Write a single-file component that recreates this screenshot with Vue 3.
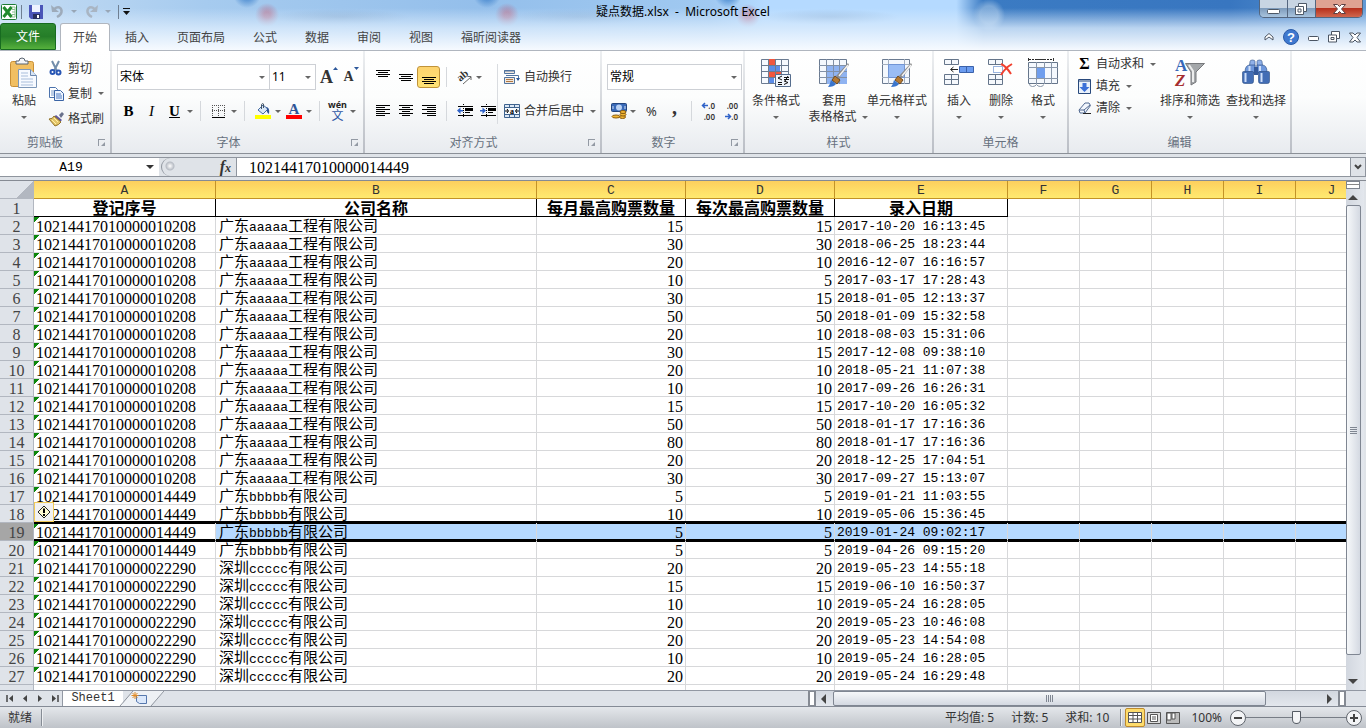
<script setup>
import { ref } from 'vue'

const tabs = ['插入', '页面布局', '公式', '数据', '审阅', '视图', '福昕阅读器']
const columns = ['A', 'B', 'C', 'D', 'E', 'F', 'G', 'H', 'I', 'J']
const heads = ['登记序号', '公司名称', '每月最高购票数量', '每次最高购票数量', '录入日期']

const A = '10214417010000010208'
const B = '10214417010000014449'
const C = '10214417010000022290'
const names = {
  [A]: ['广东', 'aaaaa', '工程有限公司'],
  [B]: ['广东', 'bbbbb', '有限公司'],
  [C]: ['深圳', 'ccccc', '有限公司']
}
const rows = [
  [A, 15, 15, '2017-10-20 16:13:45'],
  [A, 30, 30, '2018-06-25 18:23:44'],
  [A, 20, 10, '2016-12-07 16:16:57'],
  [A, 10, 5, '2017-03-17 17:28:43'],
  [A, 30, 15, '2018-01-05 12:13:37'],
  [A, 50, 50, '2018-01-09 15:32:58'],
  [A, 20, 10, '2018-08-03 15:31:06'],
  [A, 30, 15, '2017-12-08 09:38:10'],
  [A, 20, 10, '2018-05-21 11:07:38'],
  [A, 10, 10, '2017-09-26 16:26:31'],
  [A, 15, 15, '2017-10-20 16:05:32'],
  [A, 50, 50, '2018-01-17 17:16:36'],
  [A, 80, 80, '2018-01-17 17:16:36'],
  [A, 20, 20, '2018-12-25 17:04:51'],
  [A, 30, 30, '2017-09-27 15:13:07'],
  [B, 5, 5, '2019-01-21 11:03:55'],
  [B, 10, 10, '2019-05-06 15:36:45'],
  [B, 5, 5, '2019-01-24 09:02:17'],
  [B, 5, 5, '2019-04-26 09:15:20'],
  [C, 20, 20, '2019-05-23 14:55:18'],
  [C, 15, 15, '2019-06-10 16:50:37'],
  [C, 10, 10, '2019-05-24 16:28:05'],
  [C, 20, 20, '2019-05-23 10:46:08'],
  [C, 20, 20, '2019-05-23 14:54:08'],
  [C, 10, 10, '2019-05-24 16:28:05'],
  [C, 20, 20, '2019-05-24 16:29:48']
].map((r, i) => ({ n: i + 2, id: r[0], name: names[r[0]], month: r[1], once: r[2], date: r[3] }))

const formula = ref(B)
const cellName = ref('A19')
const zoom = ref(50)
</script>

<template>
  <div class="app">
    <header class="chrome">
      <div class="title">
        <div class="quick">
          <svg class="logo" width="16" height="16"><rect x=".5" y=".5" width="15" height="15" rx="1" fill="#fff" stroke="#1d7a35" /><path d="M10 3h4v10h-4M11 5.500h3M11 8h3M11 10.500h3" stroke="#8cc090" fill="none" /><path d="M2.500 3l8 10M10.500 3l-8 10" stroke="#218a2d" stroke-width="3" /></svg>
          <i class="bar"></i>
          <button aria-label="保存"><svg width="14" height="14"><path d="M0 0h14v14H2l-2-2z" fill="#4a55b8" /><rect x="3" width="8" height="7" fill="#eef3ff" /><rect x="4" y="9" width="7" height="5" fill="#28305f" /><rect x="8" y="10" width="2" height="3" fill="#fff" /></svg></button>
          <button class="undo" aria-label="撤消"><svg width="13" height="13"><path d="M0 0l1 7h7z" fill="#9eabba" /><path d="M3.500 4Q6 1.500 8.500 2.500 11 4 10.500 7 10 10 6 12" fill="none" stroke="#9eabba" stroke-width="2.500" /></svg></button><i class="arr pale"></i>
          <button class="redo" aria-label="恢复"><svg width="13" height="13"><path d="M13 0l-1 7H5z" fill="#a9b5c3" /><path d="M9.500 4Q7 1.500 4.500 2.500 2 4 2.500 7 3 10 7 12" fill="none" stroke="#a9b5c3" stroke-width="2.500" /></svg></button><i class="arr pale"></i>
          <i class="bar"></i>
          <button class="more" aria-label="自定义"><svg width="7" height="7"><path d="M0 .5h7" stroke="#111" /><path d="M0 3h7L3.500 7z" fill="#111" /></svg></button>
        </div>
        <h1>疑点数据.xlsx&nbsp; -&nbsp; Microsoft Excel</h1>
        <div class="win">
          <button aria-label="最小化"><svg width="13" height="12"><rect x=".5" y="6.500" width="12" height="4" rx="1" fill="#fff" stroke="#4d5866" /></svg></button>
          <button aria-label="还原"><svg width="13" height="12"><path d="M3.500 .5h8v8h-3v3h-8v-8h3z" fill="#fff" stroke="#4d5866" /><path d="M3.500 3.500h5v5M3 6h3v3H3z" fill="none" stroke="#4d5866" /></svg></button>
          <button class="close" aria-label="关闭"><svg width="13" height="12"><path d="M.5 1.500h4l2 2 2-2h4L8.500 6l4 4.500h-4l-2-2-2 2h-4L4.500 6z" fill="#fff" stroke="#5d4043" /></svg></button>
        </div>
      </div>
      <nav class="tabs">
        <button class="file">文件</button>
        <button class="on">开始</button>
        <button v-for="t in tabs" :key="t">{{ t }}</button>
        <div class="tools">
          <svg width="10" height="8"><path d="M1 4l4-3.500L9 4v3L5 4 1 7z" fill="#fff" stroke="#4b5563" /></svg>
          <svg width="16" height="16"><circle cx="8" cy="8" r="7.500" fill="#3f78cf" stroke="#2a5ba8" /><text x="8" y="13" class="q">?</text></svg>
          <svg width="11" height="12"><rect x=".5" y="5.500" width="10" height="4" rx="1" fill="#fff" stroke="#4b5563" /></svg>
          <svg width="12" height="12"><path d="M3.500.5h8v7h-3v3.500h-8V4h3z" fill="#fff" stroke="#4b5563" /><path d="M3.500 4h5v3.500M3 6.500h3v2H3z" fill="none" stroke="#4b5563" /></svg>
          <svg width="12" height="11"><path d="M.5 1h3.500l2 2 2-2h3.500L8 5.500l3.500 4.500H8L6 8l-2 2H.5L4 5.500z" fill="#fff" stroke="#4b5563" /></svg>
        </div>
      </nav>
    </header>

    <main class="ribbon">
      <section class="group clip">
        <div class="body">
          <button class="big paste">
            <svg width="28" height="32" viewBox="0 0 28 32"><rect x=".5" y="3.500" width="23" height="25" rx="2" fill="#f1bf62" stroke="#c98f35" /><path d="M6 6V3h3q0-3 3-3t3 3h3v3z" fill="#f3f5f8" stroke="#59636f" /><path d="M8.500 11.500h12l6 6v12h-18z" fill="#f7faff" stroke="#7d97b8" /><path d="M20.500 11.500v6h6" fill="#d7e4f4" stroke="#6d89b0" /><path d="M11 15h7M11 18h7M11 21h12M11 24h12M11 27h12" stroke="#a9bedb" /></svg>
            <span>粘贴</span><i class="arr"></i>
          </button>
          <div class="stack">
            <button><svg width="14" height="15"><path d="M3 0l5 10M10 0L5 10" stroke="#718dab" stroke-width="2" /><g fill="none" stroke="#2856b4" stroke-width="2"><circle cx="3.500" cy="11" r="2" /><circle cx="9.500" cy="11.500" r="2" /></g></svg>剪切</button>
            <button><svg width="15" height="14"><path d="M.5.500h6l2 2v8h-8z" fill="#fff" stroke="#4c73ad" /><path d="M2 4h4M2 6h4M2 8h4" stroke="#7b9dcc" /><path d="M5.500 3.500h6l3 3v7h-9z" fill="#eef5ff" stroke="#3a64a5" /><path d="M7 7h5M7 9h6M7 11h6" stroke="#4c7bc1" /></svg>复制<i class="arr"></i></button>
            <button><svg width="15" height="14"><path d="M10 3l3-3 2 2-3 4z" fill="#69718c" /><path d="M7 3l6 5-2 2-6-5z" fill="#5f579e" /><path d="M0 7q4 0 5-3l7 6q-2 3-6 4z" fill="#e4c568" stroke="#92732a" /><path d="M3 8l4 4M5 6l4 4" stroke="#fff0a8" /></svg>格式刷</button>
          </div>
        </div>
        <footer>剪贴板<i class="launch"></i></footer>
      </section>

      <section class="group font">
        <div class="body rows">
          <div class="line">
            <span class="combo face"><select aria-label="字体"><option>宋体</option></select><i class="arr"></i></span>
            <span class="combo size"><select aria-label="字号"><option>11</option></select><i class="arr"></i></span>
            <button class="w22 big-a" aria-label="增大字号"><b>A</b><svg width="5" height="3"><path d="M0 3h5L2.500 0z" fill="#2c579a" /></svg></button>
            <button class="w22 small-a" aria-label="减小字号"><b>A</b><svg width="5" height="3"><path d="M0 0h5L2.500 3z" fill="#2c579a" /></svg></button>
          </div>
          <div class="line second">
            <button class="w23 serif"><b>B</b></button>
            <button class="w23 serif"><em>I</em></button>
            <button class="w23 serif"><b><u>U</u></b></button><i class="arr"></i>
            <i class="sep"></i>
            <button class="w23" aria-label="边框"><svg width="13" height="13"><path d="M.5 0v11M6.500 0v11M12.500 0v11M0 .5h13M0 5.500h13" stroke="#555" stroke-dasharray="1 1" /><path d="M0 12.500h13" stroke="#000" /></svg></button><i class="arr"></i>
            <i class="sep"></i>
            <button class="w23" aria-label="填充颜色"><svg width="16" height="16"><path d="M3 7l5-5 5 4-5 5z" fill="#d9e8f9" stroke="#446ba3" /><path d="M6.500 6V1.500Q7 0 8.500 1v4" fill="none" stroke="#456" /><path d="M11 4q4 0 3 7-3-2-2-5z" fill="#2f5597" /><path d="M0 12h16v4H0z" fill="#ff0" /></svg></button><i class="arr"></i>
            <button class="w23" aria-label="字体颜色"><svg width="16" height="16"><text x="8" y="11" class="fc">A</text><path d="M0 12h16v4H0z" fill="red" /></svg></button><i class="arr"></i>
            <i class="sep"></i>
            <button class="w23 wen" aria-label="拼音"><small>wén</small><span>文</span></button><i class="arr"></i>
          </div>
        </div>
        <footer>字体<i class="launch"></i></footer>
      </section>

      <section class="group align">
        <div class="body">
          <div class="rows">
            <div class="line">
              <button class="w23" aria-label="顶端对齐"><svg width="14" height="16"><path d="M0 1.500h14M2 3.500h10M0 5.500h14M2 7.500h10" stroke="#000" /></svg></button>
              <button class="w23" aria-label="垂直居中"><svg width="14" height="16"><path d="M0 5.500h14M2 7.500h10M0 9.500h14M2 11.500h10" stroke="#000" /></svg></button>
              <button class="w23 lit" aria-label="底端对齐"><svg width="14" height="16"><path d="M0 8.500h14M2 10.500h10M0 12.500h14M2 14.500h10" stroke="#000" /></svg></button>
              <i class="sep"></i>
              <button class="w23" aria-label="方向"><svg width="16" height="15"><text x="1" y="10" class="ab" transform="rotate(-40 5 8)">ab</text><path d="M6 14l8-7M10.500 6.500H14v3.500" stroke="#666" fill="none" /></svg></button><i class="arr"></i>
            </div>
            <div class="line second">
              <button class="w23" aria-label="左对齐"><svg width="14" height="12"><path d="M0 .5h14M0 2.500h9M0 4.500h14M0 6.500h9M0 8.500h14M0 10.500h9" stroke="#000" /></svg></button>
              <button class="w23" aria-label="居中"><svg width="14" height="12"><path d="M0 .5h14M3 2.500h8M0 4.500h14M3 6.500h8M0 8.500h14M3 10.500h8" stroke="#000" /></svg></button>
              <button class="w23" aria-label="右对齐"><svg width="14" height="12"><path d="M0 .5h14M5 2.500h9M0 4.500h14M5 6.500h9M0 8.500h14M5 10.500h9" stroke="#000" /></svg></button>
              <i class="sep"></i>
              <button class="w23" aria-label="减少缩进"><svg width="16" height="14"><path d="M1 2.500h15M8 4.500h8M8 6.500h8M8 8.500h5M1 11.500h15" stroke="#000" /><path d="M8 5.500h8" stroke="#000" /><path d="M6.500 0v14" stroke="#000" stroke-dasharray="1 1" /><path d="M0 6.500l3.500-3V6H6v1.500H3.500V10z" fill="#2f62c8" /></svg></button>
              <button class="w23" aria-label="增加缩进"><svg width="16" height="14"><path d="M1 2.500h15M8 4.500h8M8 6.500h8M8 8.500h5M1 11.500h15" stroke="#000" /><path d="M8 5.500h8" stroke="#000" /><path d="M6.500 0v14" stroke="#000" stroke-dasharray="1 1" /><path d="M6 6.500l-3.500-3V6H0v1.500h2.500V10z" fill="#2f62c8" /></svg></button>
            </div>
          </div>
          <i class="rule"></i>
          <div class="rows wrap">
            <button class="line text"><svg width="16" height="15"><path d="M.5.500h10v3H.5zM.5 7.500h10v6H.5z" fill="#f2e8dd" stroke="#52749f" /><path d="M0 1h11" stroke="#52749f" /><path d="M2 9.500h7M2 11.500h7" stroke="#b27842" /><path d="M2 5.500h12.500V10" stroke="#52749f" fill="none" /><path d="M12 8h4l-2 3z" fill="#2d5797" /></svg>自动换行</button>
            <button class="line text second"><svg width="16" height="14"><path d="M.5.500h15v13H.5z" fill="#dce8f6" stroke="#3e638f" /><path d="M0 3.500h16M0 10.500h16M5.500 0v3M10.500 0v3M5.500 11v3M10.500 11v3" stroke="#3e638f" /><path d="M1 4h14v6H1z" fill="#f6fafe" /><path d="M1 7h3M15 7h-3M3 5l1.500 2L3 9M13 5l-1.500 2L13 9" stroke="#000" fill="none" /><text x="8" y="9.500" class="ma">a</text></svg>合并后居中<i class="arr"></i></button>
          </div>
        </div>
        <footer>对齐方式<i class="launch"></i></footer>
      </section>

      <section class="group number">
        <div class="body rows">
          <div class="line"><span class="combo fmt"><select aria-label="数字格式"><option>常规</option></select><i class="arr"></i></span></div>
          <div class="line second">
            <button class="w23" aria-label="会计格式"><svg width="16" height="16"><rect x=".5" y=".5" width="15" height="8" rx="1" fill="#3969b7" stroke="#23457e" /><circle cx="8" cy="4.500" r="3" fill="#b9d1f3" /><path d="M2 3v3M14 3v3" stroke="#cfe0f8" /><g fill="#f2b632" stroke="#8a5c10"><ellipse cx="5" cy="13.500" rx="4" ry="1.500" /><ellipse cx="11.500" cy="14" rx="3" ry="1.500" /><ellipse cx="12" cy="11.500" rx="3" ry="1.500" /><ellipse cx="12" cy="9" rx="3" ry="1.500" /></g></svg></button><i class="arr"></i>
            <button class="w23 percent">%</button>
            <button class="w23 comma">,</button>
            <i class="sep"></i>
            <button class="w23 dec"><span><svg width="6" height="5"><path d="M6 2.500H1M3 0L.5 2.500 3 5" fill="none" stroke="#2f62c8" stroke-width="1.500" /></svg>.0</span><span>.00</span></button>
            <button class="w23 dec"><span>.00</span><span><svg width="6" height="5"><path d="M0 2.500h5M3 0l2.500 2.500L3 5" fill="none" stroke="#2f62c8" stroke-width="1.500" /></svg>.0</span></button>
          </div>
        </div>
        <footer>数字<i class="launch"></i></footer>
      </section>

      <section class="group styles">
        <div class="body">
          <button class="big b62">
            <svg width="30" height="30"><path d="M.5 1.500h27v24H.5z" fill="#f6faff" stroke="#6b7b91" /><path d="M7 1h7v6H7zM7 14h13v6H7z" fill="#f0573f" /><path d="M7 7h12v6H7zM7 20h6v5H7z" fill="#5c8de8" /><path d="M0 7.500h28M0 13.500h28M0 19.500h28M7.500 1v25M14.500 1v25M20.500 1v25" stroke="#6b7b91" fill="none" /><path d="M14.500 16.500h15v12h-15z" fill="#f1f6fd" stroke="#556d8d" /><path d="M21 18l-4 2 4 2M17 24.500h4M17 26.500h4M23 19.500h5M23 21.500h5M27 18l-3 5M23 23l4 1.500-4 2" fill="none" stroke="#111" /></svg>
            <span>条件格式</span><i class="arr"></i>
          </button>
          <button class="big b54">
            <svg width="30" height="30"><path d="M.5 1.500h27v24H.5z" fill="#f4f8fd" stroke="#6b7b91" /><path d="M7 8h21v18H7z" fill="#8fb3f1" /><path d="M0 7.500h28M0 13.500h28M0 19.500h28M7.500 1v25M14.500 1v25M20.500 1v25" stroke="#8190a6" fill="none" /><path d="M30 7L20 20l-3-2L29 5z" fill="#8b8b8b" /><path d="M29 7l-9 11" stroke="#f4f4f4" stroke-width="1.500" /><path d="M16 18l5 4-3 4-5-4z" fill="#b77a32" stroke="#6e4a1f" /><path d="M12 22l5 4q-2 3-8 3 2-2 3-7z" fill="#3a75cc" /></svg>
            <span>套用</span><span class="two">表格格式<i class="arr"></i></span>
          </button>
          <button class="big b72">
            <svg width="30" height="30"><path d="M.5 1.500h27v24H.5z" fill="#f4f8fd" stroke="#6b7b91" /><path d="M0 6.500h28M0 19.500h28M6.500 1v25M22.500 1v25" stroke="#a4afbe" fill="none" /><path d="M6.500 6.500h16v13h-16z" fill="#9abdf5" stroke="#7195d5" /><path d="M30 7L20 20l-3-2L29 5z" fill="#8b8b8b" /><path d="M29 7l-9 11" stroke="#f4f4f4" stroke-width="1.500" /><path d="M16 18l5 4-3 4-5-4z" fill="#b77a32" stroke="#6e4a1f" /><path d="M12 22l5 4q-2 3-8 3 2-2 3-7z" fill="#3a75cc" /></svg>
            <span>单元格样式</span><i class="arr"></i>
          </button>
        </div>
        <footer>样式</footer>
      </section>

      <section class="group cells">
        <div class="body">
          <button class="big b42">
            <svg width="30" height="30"><path d="M.5 1.500h14v5H.5zM7.500 1v5M.5 16.500h14v10H.5zM7.500 16v10M0 21.500h15" fill="#f5f8fc" stroke="#65758a" /><path d="M15.500 8.500h14v6h-14zM22.500 8.500v6" fill="#6b9cf0" stroke="#3b62aa" /><path d="M14 11.500H7M9.500 9L6.500 11.500l3 2.500" fill="none" stroke="#222" /></svg>
            <span>插入</span><i class="arr"></i>
          </button>
          <button class="big b42">
            <svg width="26" height="30"><path d="M.5 1.500h14v5H.5zM7.500 1v5M.5 16.500h14v10H.5zM7.500 16v10M0 21.500h15" fill="#f5f8fc" stroke="#65758a" /><path d="M5.500 8.500h9v6h-9z" fill="#fff" stroke="#3469bf" stroke-dasharray="1 1" /><path d="M13 6q5 2 10 10M24 6q-7 4-11 11" fill="none" stroke="#f1402f" stroke-width="2" /></svg>
            <span>删除</span><i class="arr"></i>
          </button>
          <button class="big b42">
            <svg width="30" height="30"><path d="M1 1.500h25" stroke="#222" stroke-dasharray="2 1" /><path d="M.5 0v3M25.500 0v3M8 1.500h10" stroke="#333" /><path d="M.5 4.500h29v21H.5z" fill="#f4f8fd" stroke="#65758a" /><path d="M0 9.500h30M0 20.500h30M8.500 4v22M16.500 4v22M23.500 4v22" stroke="#8997aa" fill="none" /><path d="M9 10h8v10H9z" fill="#6e9ded" /><path d="M1.500 26q0 2.500 3 2.500t4-2q1 2 4 2t3-2" fill="#fff" stroke="#8694a8" /></svg>
            <span>格式</span><i class="arr"></i>
          </button>
        </div>
        <footer>单元格</footer>
      </section>

      <section class="group edit">
        <div class="body">
          <div class="stack">
            <button><b class="sum">Σ</b>自动求和<i class="arr"></i></button>
            <button><svg width="13" height="15"><path d="M.5.500h12v14H.5z" fill="#e9f1fb" stroke="#28497c" /><path d="M0 2h13" stroke="#28497c" /><path d="M4.500 4h4v4h3l-5 5-5-5h3z" fill="#3a70d8" /></svg>填充<i class="arr"></i></button>
            <button><svg width="13" height="12"><path d="M1 8l6-7h4l1.500 2.500L7 11H2z" fill="#f3f7fd" stroke="#526a91" /><path d="M1 8h5l6-5M6 8l1 3" fill="none" stroke="#526a91" /><path d="M5 11.500h8" stroke="#222" /></svg>清除<i class="arr"></i></button>
          </div>
          <button class="big b66">
            <svg width="30" height="30"><text x="0" y="13" class="sa">A</text><text x="0" y="28" class="sz">Z</text><path d="M10.500 5.500h19L21 14v10l-5 3V14z" fill="#a4a7aa" stroke="#77797c" /><path d="M14 7l4 6v11" stroke="#eceded" stroke-width="2" fill="none" /></svg>
            <span>排序和筛选</span><i class="arr"></i>
          </button>
          <button class="big b66">
            <svg width="28" height="30"><g stroke="#294b81" stroke-width=".6"><path d="M8 3.500Q8 2 10.500 2t2.500 1.500V12H7zM20 3.500Q20 2 17.500 2T15 3.500V12h6z" fill="#8fb0e8" /><path d="M3 14q0-7 5-7h5v8H3zM25 14q0-7-5-7h-5v8h10z" fill="#6f98dc" /><path d="M.500 14.500q0-1 1-1h9q1 0 1 1v9q0 2-2 2h-7q-2 0-2-2zM16.500 14.500q0-1 1-1h9q1 0 1 1v9q0 2-2 2h-7q-2 0-2-2z" fill="#426db5" /></g><path d="M3.500 15v9M19.500 15v9M7.500 8v5M18 8v5" stroke="#cfe0fa" stroke-width="2" /><path d="M12 9h4v8h-4z" fill="#33599b" /></svg>
            <span>查找和选择</span><i class="arr"></i>
          </button>
        </div>
        <footer>编辑</footer>
      </section>
    </main>

    <div class="fbar">
      <div class="namebox"><input v-model="cellName" aria-label="名称框"><i class="arr dark"></i></div>
      <div class="fx"><i class="knob"></i><em>f<small>x</small></em></div>
      <input v-model="formula" class="formula" aria-label="编辑栏">
      <button class="expand" aria-label="展开编辑栏"><svg width="8" height="6"><path d="M1 1l3 3 3-3" fill="none" stroke="#444" stroke-width="2" /></svg></button>
    </div>

    <div class="sheet">
      <div class="grid">
        <table>
          <colgroup><col class="c0"><col class="ca"><col class="cb"><col class="cc"><col class="cc"><col class="ce"><col v-for="k in 5" :key="k" class="cf"></colgroup>
          <thead>
            <tr><th class="corner"></th><th v-for="c in columns" :key="c">{{ c }}</th></tr>
          </thead>
          <tbody>
            <tr class="top"><th>1</th><td v-for="h in heads" :key="h" class="head">{{ h }}</td><td v-for="k in 5" :key="k"></td></tr>
            <tr v-for="r in rows" :key="r.n" :class="{ sel: r.n === 19 }">
              <th>{{ r.n }}</th>
              <td class="id">{{ r.id }}<span v-if="r.n === 18" class="warn"><svg width="14" height="14"><path d="M7 1l6 6-6 6-6-6z" fill="#fffbd0" stroke="#222" /><path d="M7 3.500v4.500M7 9v2" stroke="#000" stroke-width="2" /></svg></span></td>
              <td class="name">{{ r.name[0] }}<span>{{ r.name[1] }}</span>{{ r.name[2] }}</td>
              <td class="num">{{ r.month }}</td>
              <td class="num">{{ r.once }}</td>
              <td class="date">{{ r.date }}</td>
              <td v-for="k in 5" :key="k"></td>
            </tr>
            <tr><th></th><td v-for="k in 10" :key="k"></td></tr>
          </tbody>
        </table>
      </div>
      <div class="vscroll">
        <i class="split"></i>
        <i class="tri up"></i>
        <i class="thumb"></i>
        <i class="tri down"></i>
      </div>
    </div>

    <div class="sheetbar">
      <div class="left">
        <div class="nav">
          <button aria-label="第一张"><svg width="8" height="7"><path d="M1 0v7" stroke="#444" stroke-width="1.500" /><path d="M7 0v7L3 3.500z" fill="#444" /></svg></button>
          <button aria-label="上一张"><svg width="8" height="7"><path d="M6 0v7L2 3.500z" fill="#444" /></svg></button>
          <button aria-label="下一张"><svg width="8" height="7"><path d="M2 0v7l4-3.500z" fill="#444" /></svg></button>
          <button aria-label="最后一张"><svg width="8" height="7"><path d="M7 0v7" stroke="#444" stroke-width="1.500" /><path d="M1 0v7l4-3.500z" fill="#444" /></svg></button>
        </div>
        <button class="tab">Sheet1</button>
        <button class="new" aria-label="新工作表"><svg width="48" height="15"><path d="M0 15L12 0h32L30 15z" fill="#eef1f5" /><path d="M-1 15L12 0M30 15L43 0" stroke="#8e949e" /><path d="M15.500 4.500h10v8h-7l-3-2z" fill="#dbe8fb" stroke="#5678ad" /><path d="M14 1v7M10.500 4.500h7M11.500 2l5 5M16.500 2l-5 5" stroke="#e08a25" /></svg></button>
      </div>
      <div class="hscroll">
        <i class="box"></i><i class="tri prev"></i><i class="hthumb"></i><i class="space"></i><i class="tri next"></i><i class="box"></i><i class="cornerbox"></i>
      </div>
    </div>

    <footer class="status">
      <span class="ready">就绪</span><i class="sbar"></i>
      <span class="stats"><span>平均值: 5</span><span>计数: 5</span><span>求和: 10</span></span>
      <i class="sbar"></i>
      <button class="view act" aria-label="普通"><svg width="14" height="11"><path d="M.5.500h13v10H.5zM0 3.500h14M0 7h14M5 0v11M9.500 0v11" fill="#fff" stroke="#555" /></svg></button>
      <button class="view" aria-label="页面布局"><svg width="14" height="12"><path d="M.5.500h13v11H.5z" fill="#ddd" stroke="#555" /><path d="M3.500 2.500h7v7h-7zM5 5h4M5 7h4" fill="#fff" stroke="#555" /></svg></button>
      <button class="view" aria-label="分页预览"><svg width="14" height="12"><path d="M.5.500h13v11H.5z" fill="#bbb" stroke="#555" /><path d="M1 1h4v7H1zM6 1h3v6H6z" fill="#fff" stroke="#555" /></svg></button>
      <span class="pct">100%</span>
      <button class="round" aria-label="缩小"><svg width="16" height="16"><circle cx="8" cy="8" r="7.500" fill="#f3f4f6" stroke="#60656d" /><path d="M4 8h8" stroke="#444" stroke-width="2" /></svg></button>
      <input v-model="zoom" class="zoom" type="range" min="0" max="100" aria-label="显示比例">
      <button class="round" aria-label="放大"><svg width="16" height="16"><circle cx="8" cy="8" r="7.500" fill="#f3f4f6" stroke="#60656d" /><path d="M4 8h8M8 4v8" stroke="#444" stroke-width="2" /></svg></button>
    </footer>
  </div>
</template>

<style>
body { margin: 0; overflow: hidden; }
</style>

<style scoped>
* { box-sizing: border-box; }
.app { display: flex; flex-direction: column; height: 100vh; overflow: hidden; font: 12px/16px "Noto Sans", "Noto Sans CJK SC", sans-serif; color: #333; background: #dfe3e8; }
button { display: flex; align-items: center; justify-content: center; flex: none; padding: 0; border: 0; background: none; font: inherit; color: inherit; white-space: nowrap; }
svg { display: block; flex: none; overflow: visible; }
.arr { flex: none; width: 0; height: 0; border: 3px solid transparent; border-top-color: #666; border-bottom: 0; }
.arr.pale { border-top-color: #98a6b6; }
.arr.dark { border-width: 4px 4px 0; border-top-color: #333; }
svg text { font-family: "Liberation Serif", serif; font-weight: 700; }
.q { font: 700 13px "Liberation Sans", sans-serif; fill: #fff; text-anchor: middle; }
.fc { font-size: 15px; fill: #2f5597; text-anchor: middle; }
.ab { font-size: 11px; fill: #333; }
.ma { font-size: 8px; fill: #000; text-anchor: middle; }
.sa { font-size: 17px; fill: #3768b8; }
.sz { font-size: 17px; fill: #a52e30; font-style: italic; }
.sum { flex: none; width: 13px; font: 700 16px/16px "Liberation Serif", serif; color: #000; text-align: center; }

.chrome {
  background:
    linear-gradient(180deg, rgba(255,255,255,0) 8px, rgba(218,235,252,.8) 28px, #f8fbff 51px),
    radial-gradient(circle at 267px 15px, rgba(190,80,105,.5) 3px, transparent 12px),
    radial-gradient(circle at 507px 15px, rgba(190,80,105,.5) 3px, transparent 12px),
    radial-gradient(circle at 748px 16px, rgba(190,80,105,.5) 3px, transparent 12px),
    radial-gradient(circle at 989px 15px, rgba(140,180,222,.8) 9px, transparent 16px),
    radial-gradient(ellipse 70px 8px at 340px 17px, rgba(90,125,165,.28), transparent),
    radial-gradient(ellipse 70px 8px at 580px 17px, rgba(90,125,165,.22), transparent),
    radial-gradient(ellipse 70px 8px at 830px 17px, rgba(90,125,165,.28), transparent),
    radial-gradient(circle at 247px -6px, #3c80ca 2px, transparent 14px),
    radial-gradient(circle at 487px -6px, #3c80ca 2px, transparent 14px),
    radial-gradient(circle at 728px -6px, #3c80ca 2px, transparent 14px),
    linear-gradient(90deg, #c5dcf3, #a6cbef 15%, #94bfeb 35%, #a0c9f1 52%, #b5daff 56%, #b5daff 70%, #3b7bc3 72%, #3876c0 90%, #6199d5);
}
.title { display: grid; grid-template-columns: 1fr auto 1fr; height: 24px; align-items: start; }
.quick { display: flex; align-items: center; height: 23px; padding-left: 1px; }
.quick .bar { width: 1px; height: 14px; margin: 0 7px 0 4px; background: #6f7f92; }
.quick .undo, .quick .redo { margin-left: 8px; margin-right: 7px; }
.quick .arr + .bar { margin-left: 7px; margin-right: 4px; }
h1 { margin: 0; font-size: 12px; font-weight: 400; line-height: 24px; color: #000; }
.win { display: flex; justify-self: end; height: 18px; margin-right: 3px; border: 1px solid #54667f; border-top: 0; border-radius: 0 0 5px 5px; overflow: hidden; }
.win button { width: 28px; border-right: 1px solid #54667f; background: linear-gradient(#c8d5e3 45%, #7f9cbc 50%, #a9c4de); }
.win .close { width: 46px; border: 0; background: linear-gradient(#dfa291 45%, #b7311d 50%, #d0674f); }
.tabs { display: flex; align-items: flex-end; height: 27px; border-bottom: 1px solid #b0b6bf; color: #444; }
.tabs > button { height: 27px; padding: 2px 14px 0; }
.tabs .file { width: 56px; margin-right: 4px; padding: 0; border: 1px solid #176b20; border-radius: 3px 3px 0 0; background: linear-gradient(#2f8b32, #257d28 50%, #55b03c); color: #fff; }
.tabs .on { width: 50px; height: 28px; padding: 0; margin-bottom: -1px; margin-right: 1px; border: 1px solid #b0b6bf; border-bottom: 0; border-radius: 3px 3px 0 0; background: #fff; }
.tools { display: flex; align-items: center; gap: 9px; height: 26px; margin-left: auto; padding-right: 5px; }

.ribbon { display: flex; height: 103px; background: linear-gradient(#fff, #fcfdfd 45%, #e8ebef); border-bottom: 1px solid #8b9097; flex: none; }
.group { display: flex; flex-direction: column; border-right: 2px solid #c9cdd2; border-image: linear-gradient(#eef0f2, #b9bdc4) 1; flex: none; }
.body { display: flex; height: 83px; }
.group > footer { position: relative; line-height: 18px; text-align: center; color: #67717e; }
.launch { position: absolute; right: 5px; top: 5px; width: 7px; height: 7px; border-left: 1px solid #939aa4; border-top: 1px solid #939aa4; }
.launch::after { content: ""; position: absolute; right: 0; bottom: 0; border: 2px solid #939aa4; border-left-color: transparent; border-top-color: transparent; }
.clip { width: 112px; } .font { width: 253px; } .align { width: 237px; } .number { width: 143px; }
.styles { width: 189px; } .cells { width: 135px; } .edit { width: 223px; }
.clip footer { padding-right: 20px; } .font footer, .align footer, .number footer { padding-right: 18px; }
.big { position: relative; flex-direction: column; justify-content: flex-start; padding-top: 7px; line-height: 16px; }
.big > svg { height: 32px; margin-bottom: 3px; }
.big .arr { margin-top: 7px; }
.big .two { display: flex; align-items: center; gap: 5px; }
.big .two .arr { margin-top: 0; margin-right: -8px; }
.paste { width: 48px; margin-right: 1px; } .b62 { width: 62px; } .b54 { width: 54px; } .b72 { width: 72px; } .b42 { width: 42px; } .b66 { width: 66px; }
.stack { display: flex; flex-direction: column; }
.stack button { justify-content: flex-start; gap: 4px; height: 25px; }
.stack .arr { margin-left: 2px; }
.clip .stack { padding-top: 5px; }
.clip .stack button svg { width: 15px; }
.edit .stack { width: 82px; padding: 2px 0 0 9px; margin-right: 6px; }
.edit .stack button { height: 22px; gap: 5px; }
.edit .stack .arr { margin-left: 1px; }
.cells .body { padding-left: 4px; }
.rows { display: block; }
.font .rows, .number .rows { padding: 0 0 0 5px; }
.line { display: flex; align-items: center; height: 26px; margin-top: 13px; }
.line.second { margin-top: 8px; }
.w22 { width: 22px; } .w23 { width: 23px; height: 22px; }
.combo { display: grid; flex: none; align-items: center; height: 26px; border: 1px solid #cdd0d5; background: #fff; }
.combo > * { grid-area: 1 / 1; }
.combo select { width: 100%; height: 24px; padding: 0 2px; border: 0; appearance: none; background: none; font: inherit; color: #000; }
.combo .arr { justify-self: end; margin-right: 4px; }
.face { width: 153px; } .size { width: 47px; margin-left: -1px; } .fmt { width: 135px; }
.big-a, .small-a { align-items: flex-start; font-family: "Liberation Serif", serif; font-size: 18px; line-height: 20px; }
.small-a { font-size: 14px; } .big-a { margin-left: 2px; }
.serif { font-family: "Liberation Serif", serif; font-size: 15px; color: #000; }
.sep { width: 1px; height: 20px; margin: 0 6px; background: #d5d8dc; flex: none; }
.font .second .arr { margin-right: 1px; }
.font .second .w23 + .arr { margin-left: 1px; }
.wen { flex-direction: column; color: #2f56a5; }
.wen small { font-size: 9px; line-height: 10px; color: #222; font-weight: 700; }
.wen span { font-size: 12px; line-height: 12px; }
.align .rows { padding-left: 6px; }
.lit { border: 1px solid #c09339; border-radius: 3px; background: linear-gradient(#fdd36e, #ffe375); }
.rule { width: 1px; height: 60px; margin: 13px 0 0; background: #d9dce0; }
.align .body > .rows:first-child { width: 132px; }
.text { gap: 4px; } .text .arr { margin-left: 2px; }
.percent { font-size: 13px; }
.comma { font: 700 20px/10px "Liberation Serif", serif; padding-bottom: 8px; }
.number .sep { margin: 0 3px 0 5px; }
.number .w23 + .arr { margin-right: 4px; }
.dec { flex-direction: column; align-items: flex-end; padding-right: 3px; font-size: 8px; line-height: 11px; font-weight: 600; }
.dec span { display: flex; align-items: center; }

.fbar { display: flex; height: 27px; flex: none; padding: 3px 0 0; background: #dfe3e8; border-bottom: 1px solid #868b94; align-items: flex-start; font-family: "Liberation Serif", serif; font-size: 16px; }
.fbar > * { height: 20px; border-top: 1px solid #8f959e; border-bottom: 1px solid #8f959e; }
.namebox { display: flex; align-items: center; width: 159px; padding-right: 5px; background: #fff; }
.fbar input { min-width: 0; padding: 2px 0 0; background: #fff; font: inherit; color: #000; outline: 0; }
.namebox input { flex: 1; height: 18px; padding: 1px 4px 0 0; border: 0; text-align: center; font-family: "Liberation Mono", monospace; font-size: 13px; }
.fx { display: flex; align-items: center; justify-content: space-between; width: 78px; padding-right: 5px; border-right: 1px solid #8f959e; }
.knob { width: 14px; height: 18px; margin-left: 2px; border-left: 1px solid #8f959e; border-radius: 9px 0 0 9px; background: radial-gradient(circle at 8px 8px, #fff, #b7bcc4 4px, #dfe3e8 5px); }
.fx em { font-weight: 700; color: #333; } .fx small { font-size: 12px; }
.fbar .formula { flex: 1; padding-left: 12px; border-left: 0; border-right: 0; }
.expand { width: 16px; border: 1px solid #8f959e; }

.sheet { display: flex; flex: 1; min-height: 0; background: #fff; }
.grid { flex: 1; min-width: 0; overflow: hidden; }
table { width: 1368px; table-layout: fixed; border-collapse: separate; border-spacing: 0; font-family: "Liberation Serif", "Noto Sans CJK SC", serif; font-size: 16px; color: #000; }
.c0 { width: 34px; } .ca { width: 182px; } .cb { width: 321px; } .cc { width: 149px; } .ce { width: 173px; } .cf { width: 72px; }
td, th { height: 18px; padding: 2px 2px 0; border-right: 1px solid #d7d8da; border-bottom: 1px solid #d7d8da; line-height: 15px; white-space: nowrap; font-weight: 400; }
tbody th { background: #dfe3e9; border-color: #b2b7c0; color: #444; }
thead th { font-family: "Liberation Mono", monospace; font-size: 13px; background: linear-gradient(#fdcf5d, #ffea70); border-color: #c39327; color: #333; }
thead .corner { border-color: #b2b7c0; background: linear-gradient(135deg, #dfe3e9 67%, #b2b7c0 67%); }
td.head { text-align: center; font-weight: 700; border-color: #000; }
.id { position: relative; background: linear-gradient(135deg, #0b870b 4px, transparent 4px) no-repeat; }
.name { padding-left: 3px; font-size: 15px; }
.name span { font-family: "Liberation Mono", monospace; font-size: 13px; line-height: 0; }
.num { text-align: right; }
.date { font-family: "Liberation Mono", monospace; font-size: 13px; }
.sel td { box-shadow: 0 -2px #000, 0 1px #000, inset 0 1px #000, inset 0 -1px #000; background-color: #b5d9ff; border-bottom-color: #000; }
.sel td.id { background-color: #fff; }
.sel th { background: #a6a6a6; }
.warn { position: absolute; left: 0; top: -3px; z-index: 1; display: grid; place-items: center; width: 20px; height: 20px; border: 1px solid #f1ca57; background: #f1f1f1; }
.vscroll { display: flex; flex-direction: column; align-items: center; width: 20px; padding-right: 4px; background: linear-gradient(90deg, #d2d7df, #e3e7ed); border-right: 2px solid #dfe3e8; }
.split { width: 14px; height: 8px; border: 1px solid #7e848e; background: linear-gradient(#fff 2px, #888 2px, #888 3px, #fff 3px); flex: none; }
.tri { width: 0; height: 0; border: 5px solid transparent; flex: none; }
.up { border-top: 0; border-bottom-color: #444; margin: 6px 0 5px; }
.thumb { width: 15px; flex: 450; border: 1px solid #7f8692; border-radius: 2px; background: repeating-linear-gradient(#7f8692 0 1px, transparent 1px 2px) 50% 50% / 7px 7px no-repeat, linear-gradient(90deg, #f6f8fa, #d4d9e2); }
.down { border-bottom: 0; border-top-color: #444; margin: 24px 0 6px; }

.sheetbar { display: flex; height: 16px; flex: none; border-top: 1px solid #9298a3; background: #dfe3e9; }
.left { display: flex; flex: 808; }
.nav { display: flex; align-items: center; width: 63px; padding-left: 2px; border-right: 1px solid #9298a3; }
.nav button { width: 15px; height: 15px; }
.tab { width: 60px; height: 15px; background: #fff; font: 12px/15px "Liberation Mono", monospace; color: #333; }
.new { margin-left: -2px; }
.hscroll { display: flex; flex: 558; align-items: center; background: linear-gradient(#d2d7df, #e3e7ed); }
.box { width: 8px; height: 15px; border: 2px solid #858a93; border-width: 1px 2px; background: #fff; flex: none; }
.prev { border-left: 0; border-right-color: #444; margin: 0 7px 0 5px; }
.next { border-right: 0; border-left-color: #444; margin-right: 6px; }
.hthumb { flex: 432; height: 15px; border: 1px solid #7f8692; border-radius: 2px; background: repeating-linear-gradient(90deg, #7f8692 0 1px, transparent 1px 2px) 50% 50% / 7px 7px no-repeat, linear-gradient(#f6f8fa, #d4d9e2); }
.space { flex: 61; }
.cornerbox { width: 20px; height: 15px; background: #dfe3e9; }

.status { display: flex; align-items: center; height: 22px; flex: none; border-top: 1px solid #858b96; background: linear-gradient(#e4e7eb, #bfc3c9); color: #333; }
.ready { padding: 0 9px 0 8px; }
.sbar { width: 1px; height: 17px; background: #868c95; box-shadow: 1px 0 #eef0f2; }
.stats { display: flex; gap: 17px; margin-left: auto; margin-right: 11px; }
.view { width: 20px; height: 19px; margin-left: -1px; }
.act { margin: 0 0 0 4px; border: 1px solid #bd8a2f; border-radius: 2px; background: #fedc6b; }
.pct { margin: 0 8px 0 8px; }
.round { width: 16px; }
.zoom { width: 100px; height: 16px; margin: 0; appearance: none; background: linear-gradient(#777d86, #777d86) 0 50% / 100% 1px no-repeat; }
.zoom::-webkit-slider-thumb { appearance: none; width: 9px; height: 13px; border: 1px solid #555b64; background: #f4f5f7; border-radius: 1px 1px 5px 5px; }
.round:last-child { margin-right: 4px; }
</style>
